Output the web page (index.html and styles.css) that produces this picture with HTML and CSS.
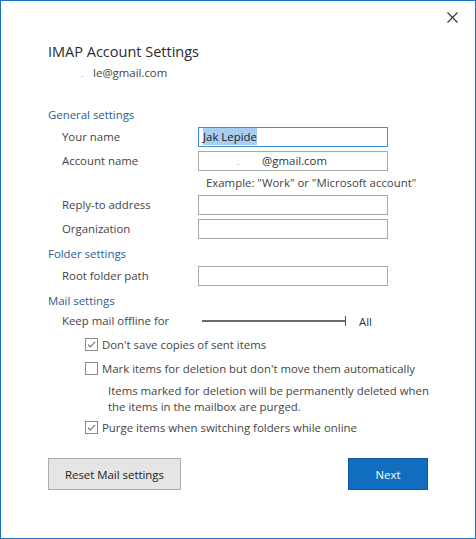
FILE: index.html
```html
<!DOCTYPE html>
<html>
<head>
<meta charset="utf-8">
<link rel="stylesheet" href="styles.css">
</head>
<body>
<div class="window">
  <div class="titlebar">
    <span class="close" aria-label="Close">
      <svg width="11" height="11" viewBox="0 0 11 11"><path d="M0.5 0.5 L10.5 10.5 M10.5 0.5 L0.5 10.5" stroke="#333" stroke-width="1.1" fill="none"/></svg>
    </span>
  </div>
  <div class="content">
    <h1 class="title">IMAP Account Settings</h1>
    <div class="email"><span class="blur">.</span>le@gmail.com</div>

    <div class="section">General settings</div>
    <div class="form">
      <label class="lbl">Your name</label>
      <div class="field focused"><span class="sel">Jak Lepide</span></div>
      <label class="lbl">Account name</label>
      <div class="field"><span class="gap1">.</span><span class="gap2">@gmail.com</span></div>
      <span></span>
      <div class="hint">Example: "Work" or "Microsoft account"</div>
      <label class="lbl">Reply-to address</label>
      <div class="field"></div>
      <label class="lbl">Organization</label>
      <div class="field"></div>
    </div>

    <div class="section s2">Folder settings</div>
    <div class="form">
      <label class="lbl">Root folder path</label>
      <div class="field"></div>
    </div>

    <div class="section s3">Mail settings</div>
    <div class="offline">
      <span class="lbl">Keep mail offline for</span>
      <span class="slider"><span class="track"></span><span class="tick"></span></span>
      <span class="all">All</span>
    </div>

    <div class="checks">
      <div class="check">
        <span class="box"><svg width="13" height="13" viewBox="0 0 13 13"><rect x="0.5" y="0.5" width="12" height="12" fill="#fff" stroke="#8a8a8a"/><path d="M3 6.6 L5.3 9 L10 3.8" stroke="#6d6d6d" stroke-width="1.1" fill="none"/></svg></span>
        <span>Don't save copies of sent items</span>
      </div>
      <div class="check">
        <span class="box"><svg width="13" height="13" viewBox="0 0 13 13"><rect x="0.5" y="0.5" width="12" height="12" fill="#fff" stroke="#8a8a8a"/></svg></span>
        <span>Mark items for deletion but don't move them automatically</span>
      </div>
      <div class="desc">Items marked for deletion will be permanently deleted when<br>the items in the mailbox are purged.</div>
      <div class="check">
        <span class="box"><svg width="13" height="13" viewBox="0 0 13 13"><rect x="0.5" y="0.5" width="12" height="12" fill="#fff" stroke="#8a8a8a"/><path d="M3 6.6 L5.3 9 L10 3.8" stroke="#6d6d6d" stroke-width="1.1" fill="none"/></svg></span>
        <span>Purge items when switching folders while online</span>
      </div>
    </div>

    <div class="buttons">
      <button class="btn reset">Reset Mail settings</button>
      <button class="btn next">Next</button>
    </div>
  </div>
</div>
</body>
</html>
```

FILE: styles.css
```css
html, body {
  margin: 0;
  padding: 0;
  background: #fff;
}
body {
  font-family: "Segoe UI", "Open Sans", "Noto Sans", sans-serif;
  font-size: 11.4px;
  color: #444;
}
.window {
  width: 476px;
  height: 539px;
  box-sizing: border-box;
  border: 1px solid #1b72c4;
  background: #fff;
}
.titlebar {
  display: flex;
  justify-content: flex-end;
  padding: 11px 17px 0 0;
  height: 11px;
}
.close {
  display: block;
  width: 11px;
  height: 11px;
}
.close svg { display: block; }
.content {
  padding: 0 0 0 47px;
}
.title {
  margin: 19px 0 0 0;
  font-size: 14.5px;
  font-weight: 400;
  color: #2b2b2b;
  line-height: 20px;
}
.email {
  margin: 2px 0 0 0;
  line-height: 18px;
  padding-left: 33px;
  color: #444;
}
.email .blur {
  color: #777;
  font-size: 8px;
  margin-right: 10px;
}
.section {
  margin-top: 24px;
  color: #2d5b94;
  line-height: 16px;
}
.s2 { margin-top: 7px; }
.s3 { margin-top: 7px; }
.form {
  display: grid;
  grid-template-columns: 136px 190px;
  row-gap: 4px;
  margin-top: 4px;
  margin-left: 14px;
  align-items: center;
}
.lbl {
  color: #444;
  line-height: 18px;
}
.field {
  box-sizing: border-box;
  height: 20px;
  border: 1px solid #a9a9a9;
  background: #fff;
  line-height: 18px;
  padding: 0 4px;
  color: #333;
}
.field.focused {
  border-color: #3c8fd9;
}
.sel {
  background: #a7cdf0;
  color: #222;
  padding: 1px 0;
}
.gap1 { margin-left: 34px; color: #777; font-size: 8px; }
.gap2 { margin-left: 23px; }
.hint {
  color: #444;
  line-height: 16px;
  padding-left: 8px;
  white-space: nowrap;
}
.offline {
  display: flex;
  align-items: center;
  margin-left: 14px;
  margin-top: 2px;
  height: 20px;
}
.offline .lbl {
  width: 140px;
}
.slider {
  width: 144px;
  height: 10px;
  display: flex;
  align-items: center;
}
.track {
  display: block;
  width: 143px;
  height: 2px;
  background: #6b6b6b;
}
.tick {
  display: block;
  width: 1px;
  height: 10px;
  background: #555;
}
.all {
  margin-left: 13px;
  color: #333;
}
.checks {
  margin-left: 37px;
  margin-top: 1px;
}
.check {
  display: flex;
  align-items: center;
  height: 24px;
}
.box {
  width: 13px;
  height: 13px;
  margin-right: 4px;
}
.box svg { display: block; }
.desc {
  padding-left: 23px;
  line-height: 16px;
  margin: 3px 0 0 0;
  white-space: nowrap;
}
.buttons {
  display: flex;
  justify-content: space-between;
  width: 380px;
  margin-top: 19px;
}
.btn {
  font-family: inherit;
  font-size: 11.4px;
  height: 32px;
  box-sizing: border-box;
  padding: 0;
  cursor: pointer;
}
.reset {
  width: 133px;
  background: #e5e5e5;
  border: 1px solid #adadad;
  color: #222;
}
.next {
  width: 80px;
  background: #116ebf;
  border: 1px solid #0c5aa5;
  color: #fff;
}
```
